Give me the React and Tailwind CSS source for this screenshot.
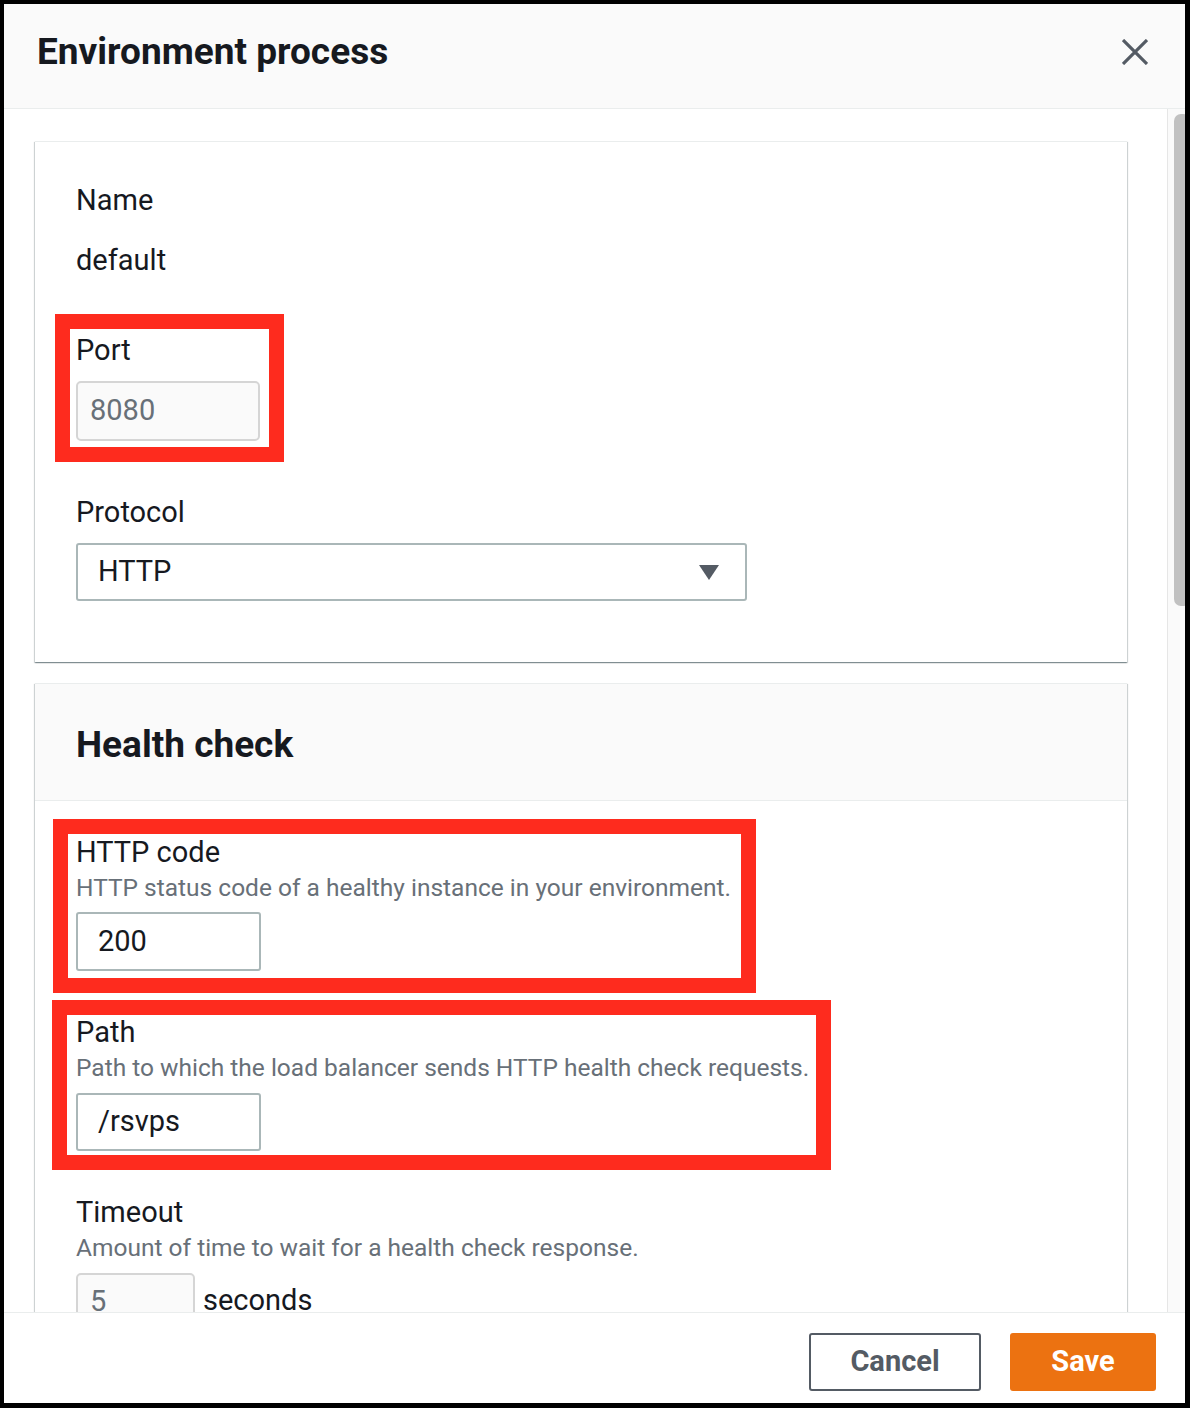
import React from 'react';

const font = { fontFamily: 'Roboto, "Open Sans", Arial, sans-serif' };

function Label({ children }) {
  return <div className="text-[29px] leading-[36px] text-[#16191f]">{children}</div>;
}

function Desc({ children }) {
  return <div className="text-[24.5px] leading-[36px] text-[#687078]">{children}</div>;
}

function RedBox({ className }) {
  return (
    <div
      className={`pointer-events-none absolute border-[15px] border-[#fe2b1e] ${className}`}
    />
  );
}

export default function App() {
  return (
    <div className="h-[1408px] w-[1190px] bg-black pl-[4px] pt-[4px] pr-[5px] pb-[5px]" style={font}>
      <div className="flex h-full flex-col bg-white">
        {/* header */}
        <div className="flex h-[105px] shrink-0 items-center justify-between border-b border-[#eaeded] bg-[#fafafa] pl-[33px] pr-[37px] pb-[8px]">
          <h1 className="text-[37px] font-bold text-[#16191f]">Environment process</h1>
          <svg width="26" height="26" viewBox="0 0 26 26" className="text-[#545b64]">
            <path d="M1 1 L25 25 M25 1 L1 25" stroke="currentColor" strokeWidth="3.2" fill="none" />
          </svg>
        </div>

        {/* body */}
        <div className="flex min-h-0 flex-1 overflow-hidden">
          <div className="flex-1 overflow-hidden pl-[31px] pr-[40px] pt-[32px]">
            {/* card 1 */}
            <div className="border-t border-[#eaeded] bg-white pl-[41px] pt-[40px] pb-[61px] shadow-[0_1px_1px_0_rgba(0,28,36,0.3),1px_1px_1px_0_rgba(0,28,36,0.15),-1px_1px_1px_0_rgba(0,28,36,0.15)]">
              <Label>Name</Label>
              <div className="mt-[24px] text-[29px] leading-[36px] text-[#16191f]">default</div>

              <div className="relative mt-[54px] w-[184px]">
                <RedBox className="-top-[18px] -left-[21px] h-[148px] w-[229px]" />
                <Label>Port</Label>
                <div className="mt-[13px] flex h-[60px] items-center rounded-[5px] border-2 border-[#d5d5d5] bg-[#fafafa] pl-[12px] text-[29px] text-[#687078]">
                  8080
                </div>
              </div>

              <div className="mt-[53px]">
                <Label>Protocol</Label>
                <div className="mt-[13px] flex h-[58px] w-[671px] items-center justify-between rounded-[3px] border-2 border-[#aab7b8] pl-[20px] pr-[26px] text-[29px] text-[#16191f]">
                  <span>HTTP</span>
                  <svg width="20" height="15" viewBox="0 0 20 15">
                    <path d="M0 0 H20 L10 15 Z" fill="#545b64" />
                  </svg>
                </div>
              </div>
            </div>

            {/* card 2 */}
            <div className="mt-[21px] border-t border-[#eaeded] bg-white shadow-[0_1px_1px_0_rgba(0,28,36,0.3),1px_1px_1px_0_rgba(0,28,36,0.15),-1px_1px_1px_0_rgba(0,28,36,0.15)]">
              <div className="flex h-[117px] items-center border-b border-[#eaeded] bg-[#fafafa] pl-[41px] pt-[5px]">
                <h2 className="text-[37px] font-bold text-[#16191f]">Health check</h2>
              </div>
              <div className="pl-[41px] pt-[33px] pb-[40px]">
                <div className="relative">
                  <RedBox className="-top-[15px] -left-[23px] h-[174px] w-[703px]" />
                  <Label>HTTP code</Label>
                  <Desc>HTTP status code of a healthy instance in your environment.</Desc>
                  <div className="mt-[6px] flex h-[59px] w-[185px] items-center rounded-[3px] border-2 border-[#aab7b8] pl-[20px] text-[29px] text-[#16191f]">
                    200
                  </div>
                </div>

                <div className="relative mt-[43px]">
                  <RedBox className="-top-[14px] -left-[24px] h-[170px] w-[779px]" />
                  <Label>Path</Label>
                  <Desc>Path to which the load balancer sends HTTP health check requests.</Desc>
                  <div className="mt-[7px] flex h-[58px] w-[185px] items-center rounded-[3px] border-2 border-[#aab7b8] pl-[20px] text-[29px] text-[#16191f]">
                    /rsvps
                  </div>
                </div>

                <div className="mt-[43px]">
                  <Label>Timeout</Label>
                  <Desc>Amount of time to wait for a health check response.</Desc>
                  <div className="mt-[7px] flex items-center gap-[8px]">
                    <div className="flex h-[58px] w-[119px] items-center rounded-[5px] border-2 border-[#d5d5d5] bg-[#fafafa] pl-[12px] text-[29px] text-[#687078]">
                      5
                    </div>
                    <span className="text-[29px] leading-[36px] text-[#16191f] -mt-[4px]">seconds</span>
                  </div>
                </div>
              </div>
            </div>
          </div>

          {/* scrollbar */}
          <div className="w-[18px] shrink-0 overflow-hidden border-l border-[#e6e6e6] bg-[#fafafa] pt-[5px] pl-[6px]">
            <div className="h-[492px] w-[16px] rounded-[7px] bg-[#c1c1c1]" />
          </div>
        </div>

        {/* footer */}
        <div className="flex h-[91px] shrink-0 items-start justify-end gap-[29px] border-t border-[#eaeded] bg-white pt-[20px] pr-[29px]">
          <button className="h-[58px] w-[172px] rounded-[3px] border-2 border-[#545b64] text-[29px] font-bold text-[#545b64]">
            Cancel
          </button>
          <button className="h-[58px] w-[146px] rounded-[3px] bg-[#ec7211] text-[29px] font-bold text-white">
            Save
          </button>
        </div>
      </div>
    </div>
  );
}
